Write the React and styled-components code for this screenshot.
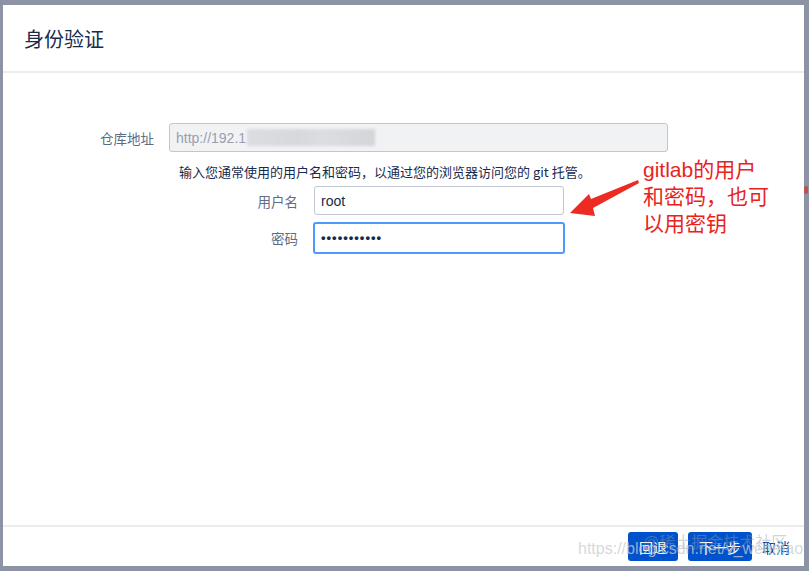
import React from 'react'
import styled, { createGlobalStyle } from 'styled-components'

const Global = createGlobalStyle`
  html, body {
    margin: 0;
    padding: 0;
    background: #8b93a5;
  }
  body {
    font-family: "Noto Sans CJK SC", "Liberation Sans", sans-serif;
  }
`

const Backdrop = styled.div`
  width: 809px;
  height: 571px;
  padding: 5px 5px 5px 3px;
  box-sizing: border-box;
  background: #8b93a5;
  position: relative;
  overflow: hidden;
`

const Dialog = styled.div`
  background: #fff;
  height: 100%;
  display: flex;
  flex-direction: column;
`

const Header = styled.div`
  height: 66px;
  flex-shrink: 0;
  border-bottom: 2px solid #ebecf0;
  display: flex;
  align-items: center;
  padding-left: 21px;
`

const Title = styled.h2`
  margin: 0;
  font-size: 20px;
  font-weight: 400;
  color: #172b4d;
`

const Body = styled.div`
  flex: 1;
  padding-top: 50px;
  display: flex;
  flex-direction: column;
`

const Row = styled.div`
  display: flex;
  align-items: center;
  margin-top: ${p => p.$top || 0}px;
`

const Label = styled.label`
  width: ${p => p.$w}px;
  text-align: right;
  font-size: 13.5px;
  color: #5e6c84;
  margin-right: ${p => p.$gap}px;
`

const Input = styled.div`
  width: ${p => p.$w}px;
  height: ${p => p.$h || 29}px;
  box-sizing: border-box;
  border: ${p => (p.$focus ? '2px solid #4c9aff' : '1px solid #c1c7d0')};
  border-radius: 3px;
  background: ${p => (p.$disabled ? '#f1f2f4' : '#fff')};
  display: flex;
  align-items: center;
  padding-left: 6px;
  font-size: 14px;
  color: ${p => (p.$disabled ? '#97a0af' : '#172b4d')};
  font-family: "Liberation Sans", "Noto Sans CJK SC", sans-serif;
`

const Blur = styled.span`
  display: inline-block;
  width: 128px;
  height: 17px;
  margin-left: 1px;
  background: linear-gradient(90deg, #dcdde1, #d6d8dc 40%, #dcdde0 60%, #d3d5d9);
  filter: blur(1.5px);
`

const Dots = styled.span`
  letter-spacing: 1px;
  font-size: 13px;
  font-weight: 700;
  transform: translateY(-1px);
`

const Help = styled.div`
  margin: 10px 0 0 176px;
  font-size: 13px;
  color: #172b4d;
`

const Footer = styled.div`
  height: 41px;
  flex-shrink: 0;
  box-sizing: border-box;
  border-top: 2px solid #ebecf0;
  display: flex;
  justify-content: flex-end;
  align-items: flex-start;
  padding: 5px 14px 0 0;
  gap: 10px;
`

const Button = styled.button`
  height: 29px;
  padding: 0 ${p => p.$px}px;
  border: none;
  border-radius: 3px;
  background: ${p => (p.$link ? 'transparent' : '#0052cc')};
  color: ${p => (p.$link ? '#0747a6' : '#fff')};
  font-size: 14px;
  font-family: "Noto Sans CJK SC", sans-serif;
`

const Note = styled.div`
  position: absolute;
  left: 643px;
  top: 156px;
  color: #e8231d;
  font-size: 21px;
  line-height: 27px;
  font-family: "Liberation Sans", "Noto Sans CJK SC", sans-serif;
`

const Arrow = styled.svg`
  position: absolute;
  left: 565px;
  top: 176px;
`

const Mark = styled.div`
  position: absolute;
  left: ${p => p.$x}px;
  top: ${p => p.$y}px;
  font-size: ${p => p.$size}px;
  color: ${p => p.$color};
  font-family: "Liberation Sans", "Noto Sans CJK SC", sans-serif;
  white-space: nowrap;
  pointer-events: none;
`

const EdgeDot = styled.div`
  position: absolute;
  left: 804px;
  top: 186px;
  width: 4px;
  height: 8px;
  border-radius: 2px;
  background: #c0504a;
`

export default function App() {
  return (
    <>
      <Global />
      <Backdrop>
        <Dialog>
          <Header>
            <Title>身份验证</Title>
          </Header>
          <Body>
            <Row>
              <Label $w={151} $gap={15}>仓库地址</Label>
              <Input $w={499} $disabled>
                http://192.1<Blur />
              </Input>
            </Row>
            <Help>输入您通常使用的用户名和密码，以通过您的浏览器访问您的 git 托管。</Help>
            <Row $top={5}>
              <Label $w={295} $gap={16}>用户名</Label>
              <Input $w={250}>root</Input>
            </Row>
            <Row $top={7}>
              <Label $w={295} $gap={15}>密码</Label>
              <Input $w={252} $h={32} $focus>
                <Dots>•••••••••••</Dots>
              </Input>
            </Row>
          </Body>
          <Footer>
            <Button $px={11}>回退</Button>
            <Button $px={11}>下一步</Button>
            <Button $px={0} $link>取消</Button>
          </Footer>
        </Dialog>
        <Note>
          gitlab的用户<br />
          和密码，也可<br />
          以用密钥
        </Note>
        <Arrow width="80" height="45" viewBox="0 0 80 45">
          <path d="M73 4 L26 23 L24 18 L5 37 L30 40 L28 32 L74 7 Z" fill="#ec2b23" />
        </Arrow>
        <EdgeDot />
        <Mark $x={643} $y={529} $size={16} $color="rgba(150,155,165,0.45)">@稀土掘金技术社区</Mark>
        <Mark $x={578} $y={540} $size={16} $color="rgba(200,203,210,0.75)">https://blog.csdn.net/v_wenmao</Mark>
      </Backdrop>
    </>
  )
}
